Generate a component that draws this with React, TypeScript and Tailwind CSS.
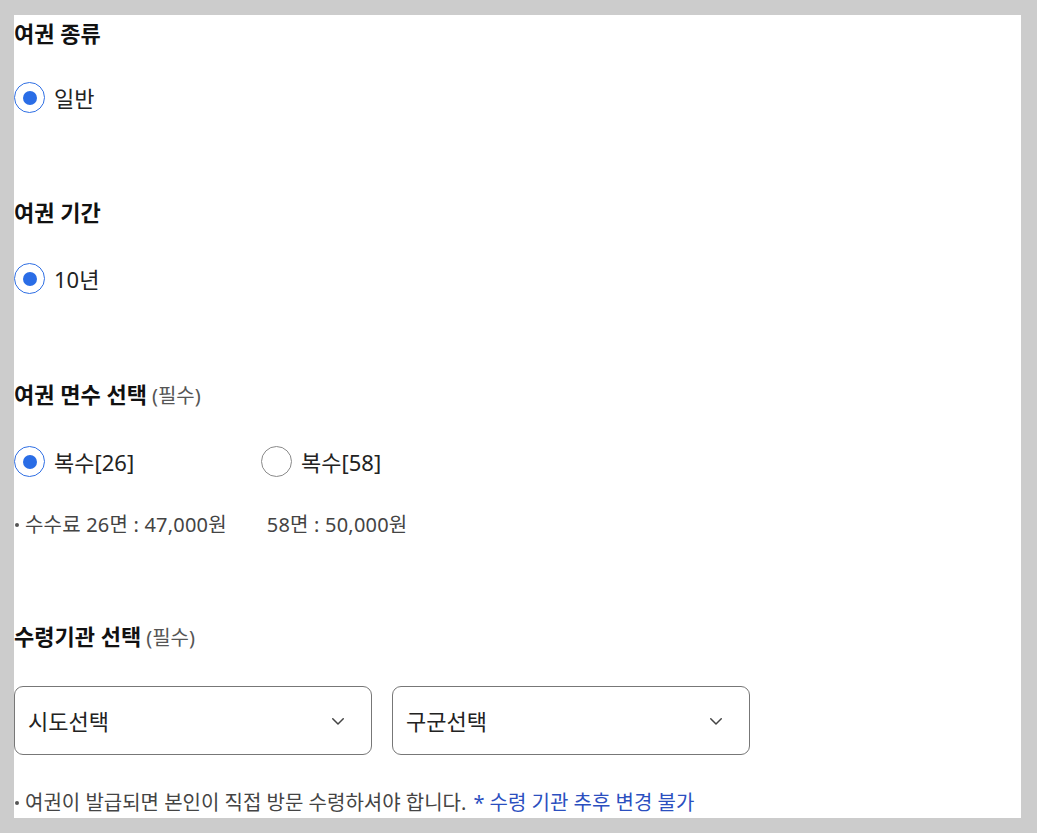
import React from 'react';

const font = { fontFamily: '"Noto Sans", "Noto Sans CJK KR", sans-serif' };

const Radio = ({ checked, label }: { checked?: boolean; label: string }) => (
  <label className="flex items-center gap-[9px] cursor-pointer">
    <span
      className={`w-[31px] h-[31px] rounded-full flex items-center justify-center bg-white ${
        checked ? 'border-[1.5px] border-[#2f6fe4]' : 'border-[1.5px] border-[#8a8a8a]'
      }`}
    >
      {checked && <span className="w-[14px] h-[14px] rounded-full bg-[#2a6de6]" />}
    </span>
    <span className="text-[22px] text-[#222] leading-none">{label}</span>
  </label>
);

const Chevron = () => (
  <svg width="18" height="18" viewBox="0 0 24 24" fill="none" stroke="#444" strokeWidth="2" strokeLinecap="round" strokeLinejoin="round">
    <path d="M5 9l7 7 7-7" />
  </svg>
);

const Select = ({ label }: { label: string }) => (
  <div className="w-[358px] h-[69px] border border-[#777] rounded-[9px] flex items-center justify-between pl-[13px] pr-[24px]">
    <span className="text-[22px] text-[#222] leading-none">{label}</span>
    <Chevron />
  </div>
);

const Heading = ({ title, req }: { title: string; req?: boolean }) => (
  <h2 className="text-[22px] font-bold text-[#111] leading-none flex items-baseline gap-[5px]">
    {title}
    {req && <span className="text-[20px] font-normal text-[#555]">(필수)</span>}
  </h2>
);

export default function App() {
  return (
    <div className="min-h-[833px] bg-[#cccccc] pt-[15px] pl-[15px]" style={font}>
      <div className="w-[1007px] h-[803px] bg-white -ml-px">
        {/* 여권 종류 */}
        <div className="pt-[7px]">
          <Heading title="여권 종류" />
        </div>
        <div className="mt-[38px]">
          <Radio checked label="일반" />
        </div>

        {/* 여권 기간 */}
        <div className="mt-[88px]">
          <Heading title="여권 기간" />
        </div>
        <div className="mt-[40px]">
          <Radio checked label="10년" />
        </div>

        {/* 여권 면수 */}
        <div className="mt-[89px]">
          <Heading title="여권 면수 선택" req />
        </div>
        <div className="mt-[40px] flex">
          <div className="w-[247px]">
            <Radio checked label="복수[26]" />
          </div>
          <Radio label="복수[58]" />
        </div>
        <p className="mt-[38px] text-[20px] text-[#444] leading-none flex items-center">
          <span className="w-[4px] h-[4px] rounded-full bg-[#555] ml-px mr-[6px]" />
          <span className="tracking-[0.2px]">수수료 26면 : 47,000원</span>
          <span className="ml-[40px] tracking-[0.2px]">58면 : 50,000원</span>
        </p>

        {/* 수령기관 */}
        <div className="mt-[90px]">
          <Heading title="수령기관 선택" req />
        </div>
        <div className="mt-[38px] flex gap-[20px]">
          <Select label="시도선택" />
          <Select label="구군선택" />
        </div>
        <p className="mt-[38px] text-[20px] text-[#444] leading-none flex items-center">
          <span className="w-[4px] h-[4px] rounded-full bg-[#555] ml-px mr-[6px]" />
          여권이 발급되면 본인이 직접 방문 수령하셔야 합니다.
          <span className="ml-[7px] text-[#2b4fbf]">* 수령 기관 추후 변경 불가</span>
        </p>
      </div>
    </div>
  );
}
